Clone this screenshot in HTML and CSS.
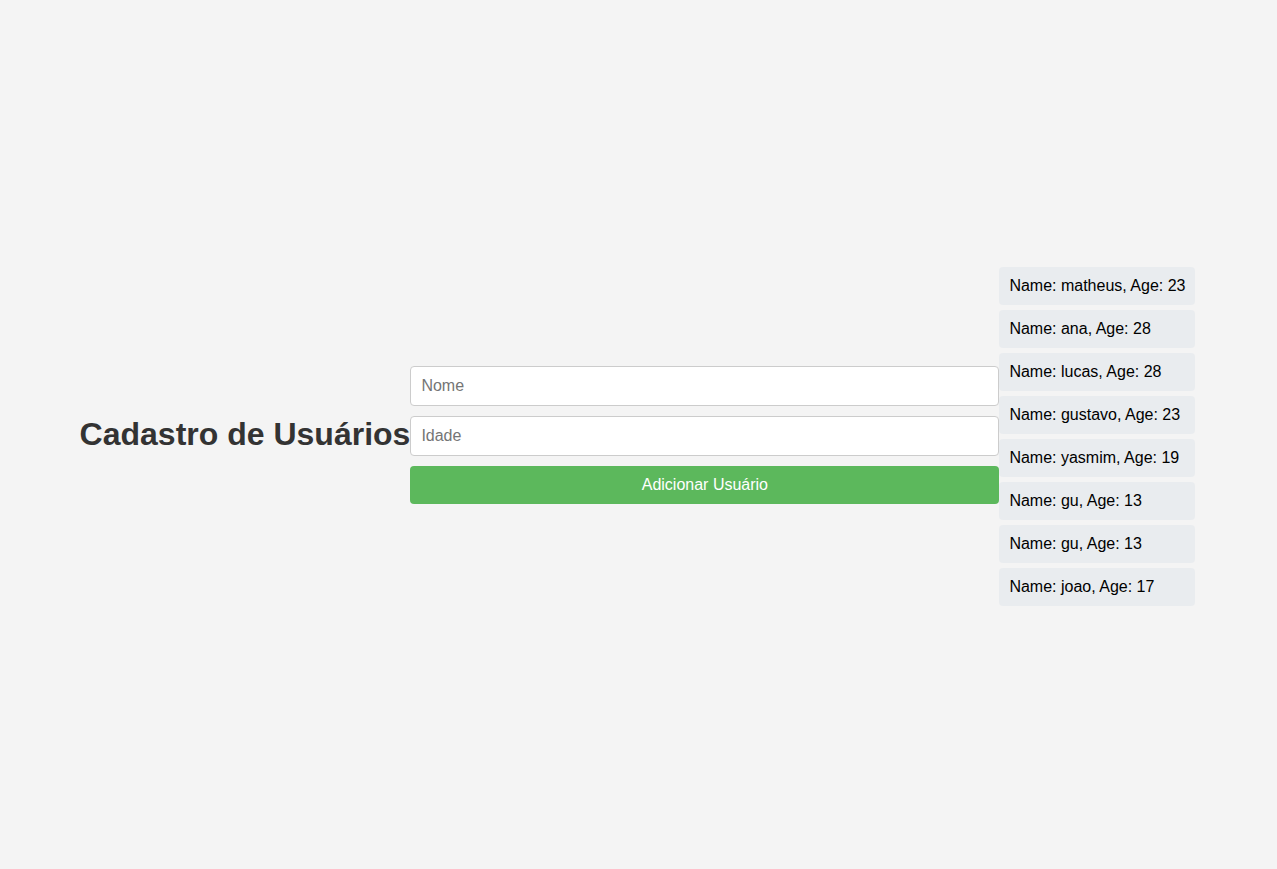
FILE: index.html
```html
<!DOCTYPE html>
<html lang="pt">
<head>
<meta charset="utf-8">
<title>Cadastro de Usuários</title>
<link rel="stylesheet" href="styles.css">
</head>
<body>
  <h1 class="title">Cadastro de Usuários</h1>
  <form class="user-form">
    <input class="field" type="text" placeholder="Nome">
    <input class="field" type="number" placeholder="Idade">
    <button class="submit" type="button">Adicionar Usuário</button>
  </form>
  <ul class="user-list">
    <li class="user-item">Name: matheus, Age: 23</li>
    <li class="user-item">Name: ana, Age: 28</li>
    <li class="user-item">Name: lucas, Age: 28</li>
    <li class="user-item">Name: gustavo, Age: 23</li>
    <li class="user-item">Name: yasmim, Age: 19</li>
    <li class="user-item">Name: gu, Age: 13</li>
    <li class="user-item">Name: gu, Age: 13</li>
    <li class="user-item">Name: joao, Age: 17</li>
  </ul>
</body>
</html>
```
FILE: styles.css
```css
html, body {
  margin: 0;
  padding: 0;
}
body {
  font-family: "Liberation Sans", Arial, sans-serif;
  background: #f4f4f4;
  height: 100vh;
  box-sizing: border-box;
  padding-right: 2px;
  display: flex;
  justify-content: center;
  align-items: center;
  color: #000;
}
.title {
  margin: 0;
  font-size: 32px;
  font-weight: bold;
  color: #333;
  white-space: nowrap;
}
.user-form {
  width: 589px;
  display: flex;
  flex-direction: column;
  gap: 10px;
}
.field {
  box-sizing: border-box;
  height: 40px;
  padding: 10px;
  border: 1px solid #ccc;
  border-radius: 4px;
  font-family: "Liberation Sans", Arial, sans-serif;
  font-size: 16px;
  background: #fff;
  margin: 0;
}
.field::placeholder {
  color: #757575;
}
.submit {
  height: 38px;
  border: none;
  border-radius: 4px;
  background: #5cb85c;
  color: #fff;
  font-family: "Liberation Sans", Arial, sans-serif;
  font-size: 16px;
  cursor: pointer;
  margin: 0;
}
.user-list {
  list-style: none;
  margin: 4px 0 0 0;
  padding: 0;
  width: 196px;
  display: flex;
  flex-direction: column;
  gap: 5px;
}
.user-item {
  background: #e9ecef;
  padding: 10px;
  border-radius: 4px;
  font-size: 16px;
  line-height: 18px;
  white-space: nowrap;
}
```
